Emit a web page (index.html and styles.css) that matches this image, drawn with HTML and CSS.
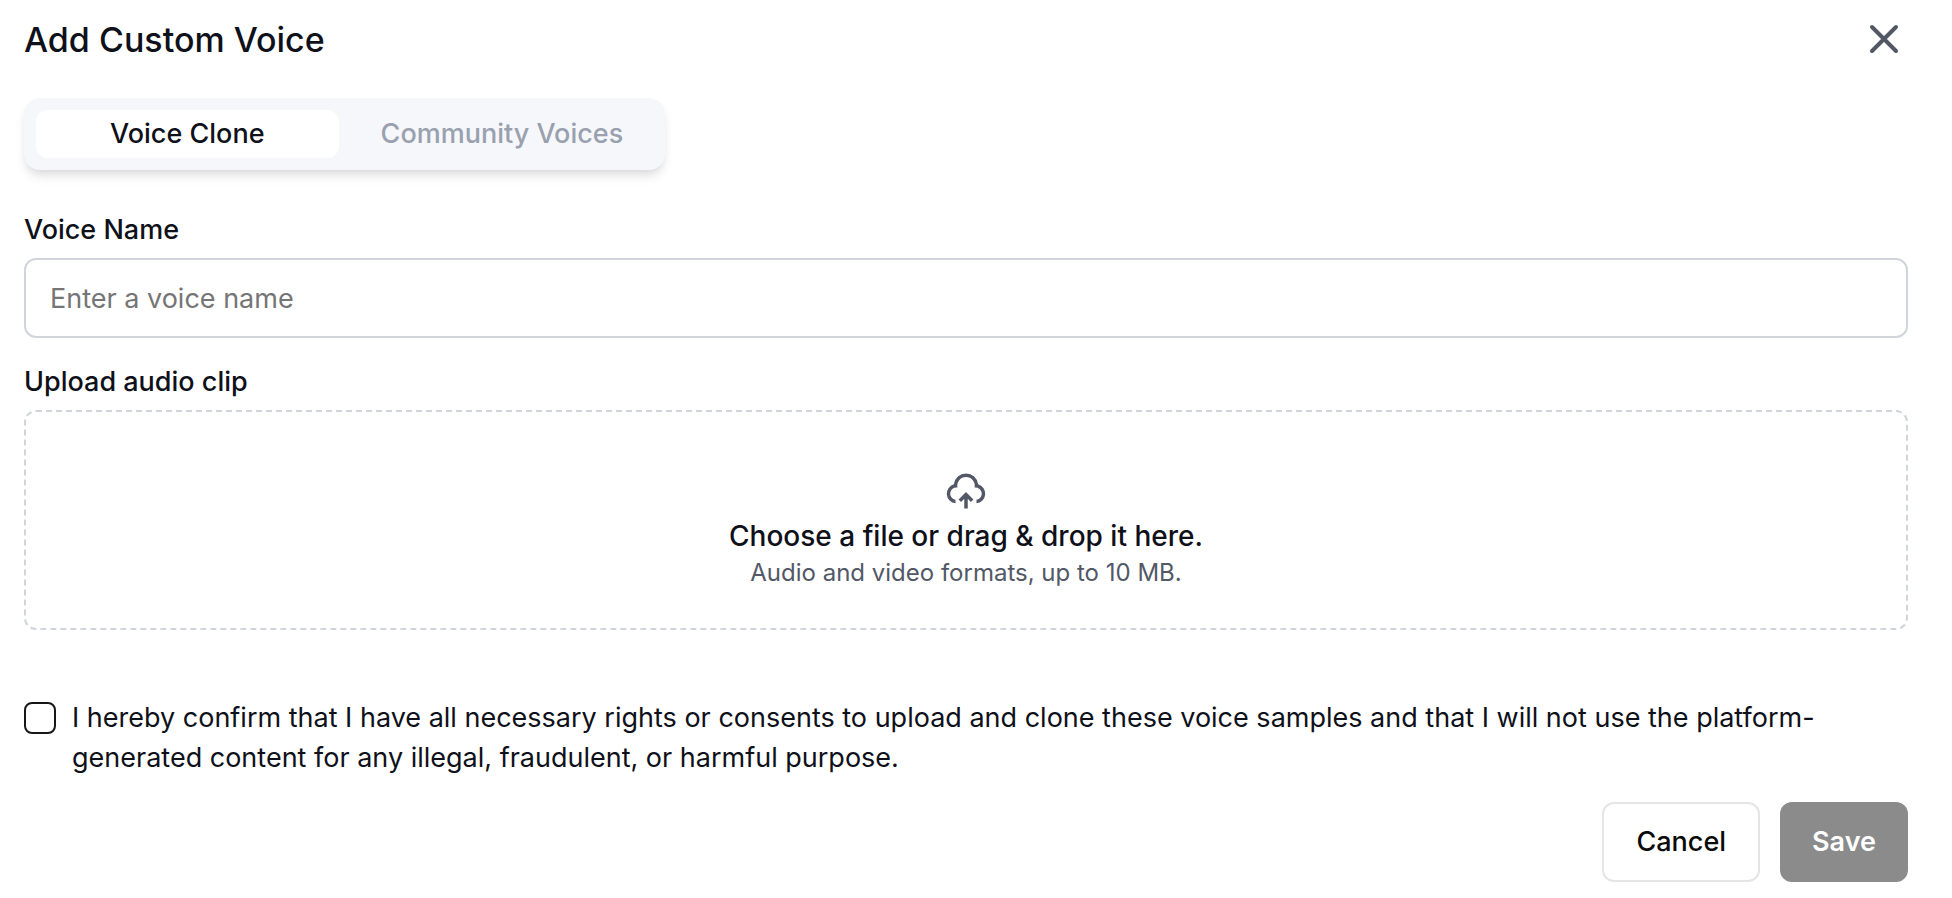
FILE: index.html
```
<!DOCTYPE html>
<html lang="en">
<head>
<meta charset="utf-8">
<meta name="viewport" content="width=device-width, initial-scale=1">
<title>Add Custom Voice</title>
<link rel="stylesheet" href="styles.css">
</head>
<body>
<main class="dialog">
  <header class="dialog-header">
    <h1 class="title">Add Custom Voice</h1>
    <button class="close" type="button" aria-label="Close">
      <svg viewBox="0 0 48 48" width="48" height="48" fill="none" stroke="currentColor" stroke-width="4" stroke-linecap="round"><path d="M12 11l24 24M36 11L12 35"/></svg>
    </button>
  </header>
  <div class="tabs" role="tablist">
    <button class="tab tab-active" type="button" role="tab" aria-selected="true">Voice Clone</button>
    <button class="tab" type="button" role="tab" aria-selected="false">Community Voices</button>
  </div>
  <form class="form">
    <div class="field">
      <label class="label" for="voice-name">Voice Name</label>
      <input class="text-input" id="voice-name" type="text" placeholder="Enter a voice name">
    </div>
    <div class="field">
      <span class="label" id="upload-label">Upload audio clip</span>
      <button class="dropzone" type="button" aria-describedby="upload-label">
        <svg class="upload-icon" viewBox="0 0 24 24" width="42" height="42" fill="currentColor"><path d="M12 12.586l4.243 4.242-1.415 1.415L13 16.415V22h-2v-5.587l-1.828 1.83-1.415-1.415L12 12.586zM12 2a7.001 7.001 0 0 1 6.954 6.194 5.5 5.5 0 0 1-.953 10.784v-2.014a3.5 3.5 0 1 0-1.112-6.91 5 5 0 1 0-9.777 0 3.5 3.5 0 0 0-1.292 6.88l.18.03v2.014a5.5 5.5 0 0 1-.954-10.784A7 7 0 0 1 12 2z"/></svg>
        <span class="drop-title">Choose a file or drag &amp; drop it here.</span>
        <span class="drop-hint">Audio and video formats, up to 10 MB.</span>
      </button>
    </div>
    <div class="consent">
      <input class="checkbox" id="consent" type="checkbox">
      <label class="consent-text" for="consent">I hereby confirm that I have all necessary rights or consents to upload and clone these voice samples and that I will not use the platform-generated content for any illegal, fraudulent, or harmful purpose.</label>
    </div>
    <div class="actions">
      <button class="button button-outline" type="button">Cancel</button>
      <button class="button button-primary" type="submit" disabled>Save</button>
    </div>
  </form>
</main>
</body>
</html>
```
FILE: styles.css
```
* {
  box-sizing: border-box;
}

body {
  margin: 0;
  background: #fff;
  color: #0f111a;
  font-family: Inter, "Liberation Sans", sans-serif;
  font-size: 27px;
  line-height: 40px;
}

button,
input {
  font: inherit;
  color: inherit;
}

button {
  padding: 0;
  border: 0;
  background: none;
}

.dialog {
  padding: 16px 44px 16px 24px;
}

.dialog-header {
  display: flex;
  align-items: center;
  justify-content: space-between;
}

.title {
  margin: 0;
  font-size: 34px;
  font-weight: 500;
  line-height: 48px;
}

.close {
  display: flex;
  color: #525866;
}

.tabs {
  display: inline-grid;
  grid-template-columns: 1fr 1fr;
  gap: 12px;
  margin-top: 34px;
  padding: 12px;
  border-radius: 16px;
  background: #f5f7fb;
  box-shadow: 0 8px 12px -2px rgba(0, 0, 0, 0.1), 0 4px 8px -4px rgba(0, 0, 0, 0.1);
}

.tab {
  height: 48px;
  padding: 0 30px;
  border-radius: 12px;
  color: #99a0ae;
  font-weight: 500;
}

.tab-active {
  background: #fff;
  color: #0f111a;
}

.form {
  display: flex;
  flex-direction: column;
  gap: 24px;
  margin-top: 40px;
}

.field {
  display: flex;
  flex-direction: column;
  gap: 8px;
}

.label {
  font-weight: 500;
}

.text-input {
  width: 100%;
  height: 80px;
  padding: 0 24px;
  border: 2px solid #d1d5db;
  border-radius: 12px;
  background: #fff;
}

.text-input::placeholder {
  color: #757575;
}

.dropzone {
  display: flex;
  flex-direction: column;
  align-items: center;
  width: 100%;
  padding: 58px 24px 38px;
  border: 2px dashed #d1d5db;
  border-radius: 12px;
}

.upload-icon {
  margin-bottom: 4px;
  color: #525866;
}

.drop-title {
  font-size: 28px;
  font-weight: 500;
}

.drop-hint {
  color: #525866;
  font-size: 24px;
  line-height: 34px;
}

.consent {
  display: flex;
  align-items: flex-start;
  gap: 16px;
  margin-top: 44px;
}

.checkbox {
  flex: none;
  appearance: none;
  width: 32px;
  height: 32px;
  margin: 4px 0 0;
  border: 2px solid #171717;
  border-radius: 8px;
  background: #fff;
}

.actions {
  display: flex;
  justify-content: flex-end;
  gap: 20px;
}

.button {
  height: 80px;
  padding: 0 32px;
  border-radius: 12px;
  font-weight: 500;
}

.button-outline {
  border: 2px solid #e5e5e5;
  color: #0a0a0a;
}

.button-primary {
  background: #8b8b8b;
  color: #fff;
  font-weight: 600;
}
```
